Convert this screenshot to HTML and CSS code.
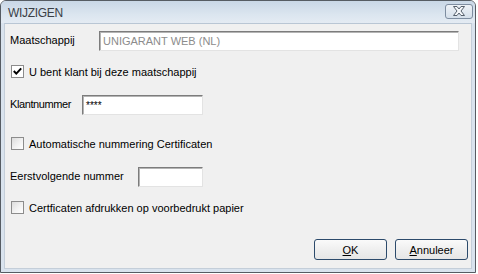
FILE: index.html
```html
<!DOCTYPE html>
<html>
<head>
<meta charset="utf-8">
<link rel="stylesheet" href="styles.css">
</head>
<body>
<div class="window">
  <div class="titlebar">
    <span class="title">WIJZIGEN</span>
    <div class="close">
      <svg width="16" height="10" viewBox="0 0 16 10">
        <path d="M2.5 0.5 H6 L8 3 L10 0.5 H13.5 L10 5 L13.5 9.5 H10 L8 7 L6 9.5 H2.5 L6 5 Z" fill="#f4f6f9" stroke="#56606c" stroke-width="1" stroke-linejoin="round"/>
      </svg>
    </div>
  </div>
  <div class="client">
    <div class="row r1">
      <span class="label l1">Maatschappij</span>
      <div class="input disabled wide">UNIGARANT WEB (NL)</div>
    </div>
    <div class="row check r2">
      <span class="box checked">
        <svg width="9" height="9" viewBox="0 0 9 9"><path d="M0.8 4 L3.3 6.6 L8.2 1.4" fill="none" stroke="#000" stroke-width="2"/></svg>
      </span>
      <span>U bent klant bij deze maatschappij</span>
    </div>
    <div class="row r3">
      <span class="label l2">Klantnummer</span>
      <div class="input klant">****</div>
    </div>
    <div class="row check r4">
      <span class="box"></span>
      <span>Automatische nummering Certificaten</span>
    </div>
    <div class="row r5">
      <span class="label l3">Eerstvolgende nummer</span>
      <div class="input small"></div>
    </div>
    <div class="row check r6">
      <span class="box"></span>
      <span>Certficaten afdrukken op voorbedrukt papier</span>
    </div>
    <div class="buttons">
      <button class="btn"><u>O</u>K</button>
      <button class="btn"><u>A</u>nnuleer</button>
    </div>
  </div>
</div>
</body>
</html>
```
FILE: styles.css
```css
html, body {
  margin: 0;
  padding: 0;
  background: #ffffff;
}
body {
  width: 478px;
  height: 274px;
  overflow: hidden;
  font-family: "Liberation Sans", Arial, sans-serif;
  font-size: 11px;
  color: #000;
}
.window {
  width: 474px;
  height: 271px;
  border: 1px solid #565c63;
  border-radius: 6px 6px 0 0;
  background: #d9e3ee;
  display: flex;
  flex-direction: column;
}
.titlebar {
  height: 22px;
  flex: none;
  display: flex;
  align-items: center;
  justify-content: space-between;
  padding: 0 2px 0 7px;
  border-radius: 5px 5px 0 0;
  background: linear-gradient(#c9d7e6, #dbe5ef 60%, #e4ebf3);
}
.title {
  font-size: 12px;
  color: #3a3f46;
  letter-spacing: -0.3px;
  margin-top: 1px;
}
.close {
  width: 26px;
  height: 13px;
  border: 1px solid #7e8da0;
  border-radius: 3px;
  background: linear-gradient(#eef2f7, #d5dfea);
  display: flex;
  align-items: center;
  justify-content: center;
  margin-top: -2px;
}
.close svg { display: block; }
.client {
  flex: 1;
  margin: 0 3px 3px 3px;
  background: #f0f0f0;
  border: 1px solid #c4ced9;
  border-top-color: #b9c6d4;
  padding: 0 0 0 5px;
  display: flex;
  flex-direction: column;
}
.row {
  display: flex;
  align-items: center;
}
.label {
  margin-top: -2px;
  flex: none;
}
.l1 { width: 89px; }
.l2 { width: 72px; letter-spacing: -0.4px; }
.l3 { width: 128px; }
.r1 { margin-top: 7px; height: 20px; }
.r2 { margin-top: 14px; height: 13px; }
.r3 { margin-top: 17px; height: 20px; }
.r4 { margin-top: 22px; height: 13px; }
.r5 { margin-top: 17px; height: 20px; }
.r6 { margin-top: 14px; height: 13px; }
.input {
  box-sizing: border-box;
  height: 20px;
  background: #fff;
  border: 1px solid;
  border-color: #7c7c7c #e3e3e3 #e3e3e3 #7c7c7c;
  box-shadow: inset 1px 1px 0 #b4b4b4;
  padding: 3px 0 0 3px;
  font-size: 11px;
  line-height: 13px;
}
.wide {
  width: 360px;
  color: #8c8c8c;
}
.klant {
  width: 121px;
  font-size: 10px;
}
.small {
  width: 65px;
}
.check { gap: 5px; padding-left: 1px; }
.box {
  box-sizing: border-box;
  width: 13px;
  height: 13px;
  border: 1px solid #8c8c8c;
  background: linear-gradient(135deg, #dcdcdc, #f4f4f4 60%, #fff);
  display: flex;
  align-items: center;
  justify-content: center;
}
.box.checked { background: #fff; }
.box svg { display: block; }
.buttons {
  margin-top: 25px;
  display: flex;
  justify-content: flex-end;
  gap: 8px;
  padding-right: 3px;
}
.btn {
  box-sizing: border-box;
  width: 73px;
  height: 21px;
  border: 1px solid #2c4a6b;
  border-radius: 3px;
  background: linear-gradient(#fafafa, #efefef 50%, #e6e6e6);
  font-family: "Liberation Sans", Arial, sans-serif;
  font-size: 11px;
  color: #000;
  padding: 0;
}
```
